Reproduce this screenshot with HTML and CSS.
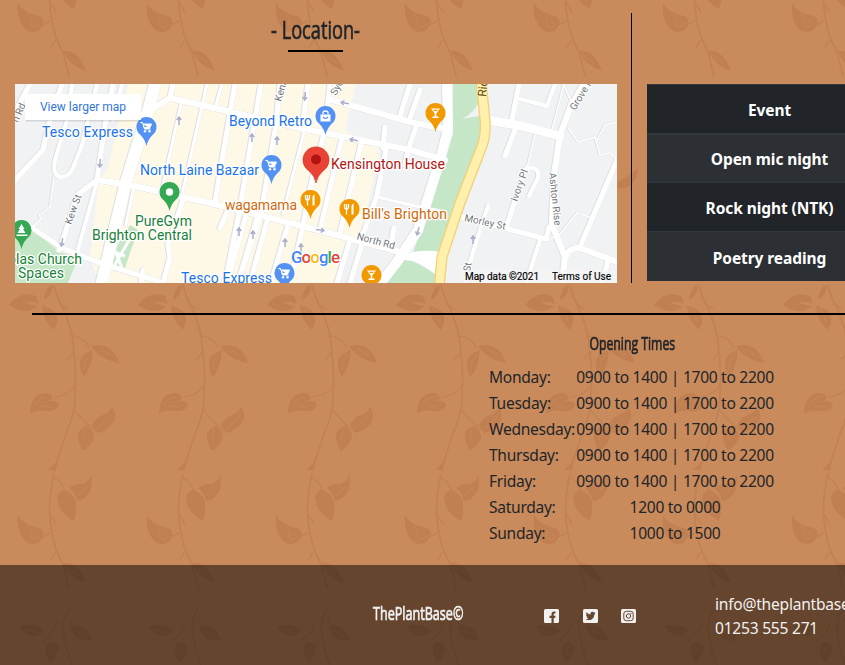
FILE: index.html
```html
<!DOCTYPE html>
<html lang="en">
<head>
<meta charset="utf-8">
<title>ThePlantBase</title>
<link rel="stylesheet" href="styles.css">
</head>
<body>
<svg class="vines" width="845" height="665" aria-hidden="true">
  <defs>
    <g id="vine">
      <path class="stem" d="M54 285Q56 296 63 308Q70 325 72 336Q77 370 75 395Q76 411 66 434L58 458L55 470M54 474Q48 500 50 520Q52 538 57 552L63 564L69 588M69 610Q61 618 64 636Q66 650 73 668"/>
      <path class="twig" d="M60 304L68 309M71 336Q82 335 89 347M73 353L68 359M75 385Q70 395 55 397M74 409Q82 420 94 430M54 478Q62 481 64 490M50 514L56 524M50 533L40 538M55 553L51 559M57 622Q54 633 43 641M69 618L73 626"/>
      <path class="leaf" d="M9 305Q20 290 36 296Q38 300 39 304Q31 301 25 302Q32 306 38 306Q26 317 9 305ZM42 305Q58 311 57 317Q58 324 54 330Q42 320 42 305ZM44 300Q44 293 50 285L53 286Q52 296 44 300ZM91 346Q112 341 119 363Q100 360 91 346ZM93 350Q79 355 80 364Q80 372 84 377Q92 367 93 350ZM30 414Q30 394 45 393Q52 392 53 399L46 402Q58 399 59 405Q57 412 46 411Q36 409 30 414ZM92 425Q97 416 103 415Q111 412 112 406Q117 414 114 421Q108 431 97 433ZM87 426Q95 432 94 438Q93 444 83 451Q71 431 87 426ZM48 470L57 461L55 470ZM69 488Q76 483 83 484Q90 480 92 474Q92 482 91 490Q85 501 77 501Q75 492 69 488ZM65 490Q77 496 76 504Q77 513 74 521Q57 512 57 496Q60 490 65 490ZM18 515Q22 523 35 527Q46 528 43 537Q40 542 38 543Q30 546 25 541Q16 531 18 515ZM63 563Q78 561 86 583Q70 578 63 563ZM19 626Q37 622 44 631Q30 643 19 626ZM70 626Q86 622 92 640Q75 644 70 626ZM52 642Q60 645 58 650Q57 655 51 663Q42 651 48 643ZM92 698Q112 690 122 680Q120 704 98 700Z"/>
      <path class="vein" d="M46 309Q51 314 52 322M100 349L110 355M90 355Q83 362 84 370M35 405Q40 397 46 397M40 406L50 407M98 428L110 417M78 495L87 487M85 430L83 440M27 525Q34 533 30 536Q34 542 40 536M34 532L38 536M67 567L78 575M27 630L38 633M76 631L84 634M52 647L50 654"/>
    </g>
    <pattern id="vines" width="129" height="665" patternUnits="userSpaceOnUse">
      <use href="#vine"/><use href="#vine" y="-512"/>
    </pattern>
  </defs>
  <rect width="845" height="665" fill="url(#vines)"/>
</svg>

<main>
  <div class="top">
    <section class="location">
      <h2><span class="narrow title">- Location-</span></h2>
      <svg class="map" viewBox="15 84 602 199" width="602" height="199">
        <defs>
          <path id="pin" d="M0 19Q-1.2 13 -6 8A10 10 0 1 1 6 8Q1.2 13 0 19Z"/>
          <g id="cart"><path d="M-6-4.500H-4L-2 2H4M-3-3H5L3.500.5H-2.500Z" fill="#fff" stroke="#fff" stroke-width="1"/><circle cx="-1.500" cy="4.300" r="1.200" fill="#fff"/><circle cx="3" cy="4.300" r="1.200" fill="#fff"/></g>
          <g id="fork"><path d="M-5-5V-2Q-5 0-3 0V5.500M-3-5V0M-1-5V-2Q-1 0-3 0" fill="none" stroke="#fff" stroke-width="1.300"/><path d="M2 5.500V-3Q2-5 4-5.500V5.500Z" fill="#fff"/></g>
          <path id="glass" d="M-4.500-4.500H4.500L.8.500V3.500H3V5H-3V3.500H-.8V.5ZM-2.500-3.300L-1.600-2H1.600L2.500-3.300Z" fill="#fff" fill-rule="evenodd"/>
          <path id="up" d="M0 4V-4M-2.200-1L0-4L2.200-1" fill="none" stroke="#a9aecb" stroke-width="1.500"/>
          <g id="roads">
            <path stroke-width="12" d="M156 80L149 108L126 182L100 290"/>
            <path stroke-width="5" d="M15 180L43 150L50 120L62 84M15 112L30 84M113 84L105 125L97 180L77 195L63 240L59 250M183 200L168 245L170 257L163 283M170 97L173 84"/>
            <path stroke-width="4" d="M72 84L67 120L55 160Q52 176 61 177Q69 177 73 168L82 145L97 84M97 182L77 253M122 84L113 120"/>
            <path stroke-width="1.500" d="M54 177L50 207L39 215L41 219L33 226"/>
            <path stroke-width="5" d="M28 225L62 248L97 262L160 282M143 270L141 284"/>
            <path stroke-width="6" d="M97 180L130 185L210 203L310 228L400 252M147 112L170 98L210 107L300 128L410 150L445 160M332 100L410 122L445 129"/>
            <path stroke-width="3" d="M182 100L163 185M207 84L182 195M134 186L126 225M222 84L215 108M305 128L283 214M377 197L415 206L440 211"/>
            <path stroke-width="5" d="M235 84L215 202M227 212L220 228M261 84L240 208L225 283M280 84L276 125L261 214L238 283M308 84L303 122M330 84L325 130L312 180L302 230L290 283M342 138L320 230M361 144L340 233M386 150L377 195L361 240M247 212L227 283M258 215L238 283M268 218L250 283M288 225L271 283M350 240L337 283M363 240L358 257L350 283M385 127L383 148M394 228L391 245M410 84L400 116M420 90L410 118M417 124L408 150L405 165"/>
            <path stroke-width="10" d="M447 80L448 130L440 160L418 230L397 262L375 290"/>
            <path stroke-width="9" d="M488 120L522 126L560 136"/>
            <path stroke-width="6" d="M588 76L570 108L560 135L554 175L552 225L565 257L562 283M565 259Q568 247 580 248L617 262"/>
            <path stroke-width="5" d="M519 84L512 120M515 130L505 156M458 216L546 239L549 227M617 160L580 247M608 261L602 283M525 170L507 225"/>
            <path stroke-width="4" d="M516 98L547 106L555 84M527 168Q540 166 538 178L529 196M488 206L472 255L465 283M540 240L526 283M588 84L570 104"/>
            <path stroke-width="1.500" d="M564 84L552 130M535 135L527 168M568 128L578 142L595 137L600 155L609 153L617 159M596 142L605 125L617 122M547 240L560 234L577 213L592 218M563 84L572 103"/>
          </g>
        </defs>
        <path fill="#f1f2f4" d="M15 84h602v199H15z"/>
        <path fill="#fef8e7" d="M128 84L107 170L98 180V188L90 258L100 283H333L346 240L361 237L380 147L345 130L356 84Z"/>
        <path fill="#c6e7c7" d="M15 236L31 229L60 252L78 258L68 283H15ZM130 225L138 230L125 268L106 264ZM453 84H479L484 135L440 253H413L453 135ZM404 256L436 274V283H385Z"/>
        <path fill="#fff" d="M397 258Q415 248 442 252L436 275Q420 260 404 260Z"/>
        <path fill="#f1f2f4" d="M462 119Q473 114 479 102L483 115Z"/>
        <path d="M108 250L125 256M112 243L122 268M134 232L114 266" stroke="#fff" stroke-width="3"/>
        <g class="road-edge"><use href="#roads"/></g>
        <use href="#roads" class="road"/>
        <path class="road" stroke-width="9" d="M447 80L448 130L440 160L418 230L397 262L375 290"/>
        <path fill="none" stroke="#f3cf70" stroke-width="11" d="M481 80L485 120Q486 136 482 146L460 203L442 257L439 290"/>
        <path fill="none" stroke="#fff0ae" stroke-width="8.500" d="M481 80L485 120Q486 136 482 146L460 203L442 257L439 290"/>
        <use href="#up" x="179" y="121"/><use href="#up" x="252" y="138"/><use href="#up" x="277" y="141"/><use href="#up" x="239" y="232"/><use href="#up" x="253" y="235"/><use href="#up" x="285" y="243"/><use href="#up" x="301" y="248"/><use href="#up" x="473" y="240"/>
        <use href="#up" transform="translate(100 163) rotate(185)"/><use href="#up" transform="translate(62 242) rotate(190)"/><use href="#up" transform="translate(305 96) rotate(185)"/><use href="#up" transform="translate(418 231) rotate(195)"/><use href="#up" transform="translate(345 103) rotate(-78)"/><use href="#up" transform="translate(354 140) rotate(-78)"/><use href="#up" transform="translate(320 230) rotate(98)"/>
        <g class="street">
          <text transform="translate(18 123) rotate(-67)">n Rd</text>
          <text transform="translate(71 225) rotate(-70)" textLength="31">Kew St</text>
          <text transform="translate(281 102) rotate(-74)">Kens</text>
          <text transform="translate(336 96) rotate(-62)">Syd</text>
          <text transform="translate(363 241) rotate(15)" textLength="39" x="-7">North Rd</text>
          <text transform="translate(464 221) rotate(12)" textLength="42">Morley St</text>
          <text transform="translate(517 202) rotate(-70)" textLength="33">Ivory Pl</text>
          <text transform="translate(549 173) rotate(84)" textLength="53">Ashton Rise</text>
          <text transform="translate(575 111) rotate(-58)">Grove H</text>
          <text transform="translate(470 272) rotate(-80)">St</text>
          <text class="route" transform="translate(486 97) rotate(-85)">Ric</text>
        </g>
        <g class="pins">
          <g transform="translate(146.500 127)"><use href="#pin" fill="#5491f5"/><use href="#cart"/></g>
          <g transform="translate(271.500 165)"><use href="#pin" fill="#5491f5"/><use href="#cart"/></g>
          <g transform="translate(284.500 273)"><use href="#pin" fill="#5491f5"/><use href="#cart"/></g>
          <g transform="translate(325.500 116)"><use href="#pin" fill="#5491f5"/><path d="M-5-1.500H5V5.500H-5Z" fill="#fff"/><path d="M-2.500-1.500V-3Q-2.500-5 0-5T2.500-3V-1.500" fill="none" stroke="#fff" stroke-width="1.300"/><path d="M-2.500 1Q0 4 2.500 1" fill="none" stroke="#5491f5" stroke-width="1.200"/></g>
          <g transform="translate(169.500 192)"><use href="#pin" fill="#34a853"/><circle r="3.700" fill="#fff"/></g>
          <g transform="translate(21.500 230)"><use href="#pin" fill="#34a853"/><path d="M0-6L3-1H1.500L4 3H-4L-1.500-1H-3ZM-5 4.500H6V6H-5Z" fill="#fff"/></g>
          <g transform="translate(310.500 200)"><use href="#pin" fill="#f29900"/><use href="#fork"/></g>
          <g transform="translate(349.500 209)"><use href="#pin" fill="#f29900"/><use href="#fork"/></g>
          <g transform="translate(435.500 113)"><use href="#pin" fill="#f29900"/><use href="#glass"/></g>
          <g transform="translate(371.500 275)"><use href="#pin" fill="#f29900"/><use href="#glass"/></g>
          <path d="M316 183Q315 176 308.500 170.500A13 13 0 1 1 323.500 170.500Q317 176 316 183Z" fill="#ea4335" stroke="#c5221f" stroke-width=".6"/><circle cx="316" cy="159.500" r="5" fill="#b31412"/>
        </g>
        <g class="place">
          <g fill="#1a73e8"><text x="42" y="137" textLength="91">Tesco Express</text><text x="229" y="126" textLength="83">Beyond Retro</text><text x="140" y="175" textLength="119">North Laine Bazaar</text><text x="181" y="283" textLength="91">Tesco Express</text></g>
          <g fill="#188038"><text x="135" y="226" textLength="57">PureGym</text><text x="92" y="240" textLength="100">Brighton Central</text><text x="8" y="264" textLength="74">olas Church</text><text x="18" y="278" textLength="46">Spaces</text></g>
          <g fill="#cf6a0a"><text x="225" y="210" textLength="72">wagamama</text><text x="362" y="219" textLength="85">Bill's Brighton</text></g>
          <text x="331" y="169" textLength="114" fill="#b31412">Kensington House</text>
        </g>
        <text class="google" x="291" y="263" textLength="49"><tspan fill="#4285f4">G</tspan><tspan fill="#ea4335">o</tspan><tspan fill="#fbbc05">o</tspan><tspan fill="#4285f4">g</tspan><tspan fill="#34a853">l</tspan><tspan fill="#ea4335">e</tspan></text>
        <path d="M461 270h156v13H461z" fill="#f5f5f5" opacity=".7"/>
        <g class="credit"><text x="465" y="280" textLength="74">Map data ©2021</text><text x="552" y="280" textLength="59">Terms of Use</text></g>
        <path d="M26 95.500h115v26H26z" fill="#000" opacity=".12"/><path d="M25 94h116v26H25z" fill="#fff"/>
        <text class="larger" x="40" y="111" textLength="86">View larger map</text>
      </svg>
    </section>
    <table class="events">
      <thead><tr><th>Event</th></tr></thead>
      <tbody><tr><th>Open mic night</th></tr><tr><th>Rock night (NTK)</th></tr><tr><th>Poetry reading</th></tr></tbody>
    </table>
  </div>
  <hr>
  <section class="opening">
    <h3><span class="narrow subtitle">Opening Times</span></h3>
    <dl>
      <dt>Monday:</dt><dd>0900 to 1400 | 1700 to 2200</dd>
      <dt>Tuesday:</dt><dd>0900 to 1400 | 1700 to 2200</dd>
      <dt>Wednesday:</dt><dd>0900 to 1400 | 1700 to 2200</dd>
      <dt>Thursday:</dt><dd>0900 to 1400 | 1700 to 2200</dd>
      <dt>Friday:</dt><dd>0900 to 1400 | 1700 to 2200</dd>
      <dt>Saturday:</dt><dd>1200 to 0000</dd>
      <dt>Sunday:</dt><dd>1000 to 1500</dd>
    </dl>
  </section>
</main>
<footer>
  <div class="brand"><span class="narrow name">ThePlantBase©</span></div>
  <nav>
    <svg viewBox="0 0 15 14" width="15" height="14"><rect width="15" height="14" rx="1.500" fill="#f1f1f1"/><path d="M7.500 14V9H5.500V6.800H7.500V5.300Q7.500 2.600 10 2.600H11.500V4.600H10.600Q9.700 4.600 9.700 5.500V6.800H11.500L11.200 9H9.700V14Z" fill="#66462f"/></svg>
    <svg viewBox="0 0 15 14" width="15" height="14"><rect width="15" height="14" rx="1.500" fill="#f1f1f1"/><path d="M12.500 4L11.500 5.200Q11.500 8.500 9 10.200Q6 12 2.500 10.200Q4.500 10.300 5.500 9.400Q4 9.200 3.600 8H4.500Q3 7.300 3 5.700L3.900 6Q2.500 4.600 3.400 3.200Q5 5.200 7.400 5.400Q7.200 2.800 9.400 2.800Q10.300 2.800 11 3.500L12.200 3L11.500 4.200Z" fill="#66462f"/></svg>
    <svg viewBox="0 0 15 14" width="15" height="14"><rect width="15" height="14" rx="1.500" fill="#f1f1f1"/><rect x="2.800" y="2.300" width="9.400" height="9.400" rx="2.600" fill="none" stroke="#66462f"/><circle cx="7.500" cy="7" r="2.200" fill="none" stroke="#66462f"/><circle cx="10" cy="4.500" r=".6" fill="#66462f"/></svg>
  </nav>
  <address><span class="mail">info@theplantbase.co.uk</span><span class="phone">01253 555 271</span></address>
</footer>
</body>
</html>
```
FILE: styles.css
```css
* { box-sizing: border-box; }
html { overflow: hidden; }
body { margin: 0; width: 845px; height: 665px; overflow: hidden; position: relative; background: #ca8b5c; color: #212529; font: 15.6px/26px "Noto Sans", "Open Sans", sans-serif; }

.vines { position: absolute; left: 0; top: 0; z-index: -1; }
.stem, .twig, .vein { fill: none; stroke: #c28253; stroke-linecap: round; }
.stem { stroke-width: 2; }
.twig { stroke-width: 1.5; }
.leaf { fill: #c18051; }
.vein { stroke: #ca8b5c; stroke-width: 1; opacity: .65; }

main { height: 565px; padding-top: 13px; overflow: hidden; }
.top { display: flex; height: 270px; }
.location { flex: none; width: 632px; padding-left: 15px; border-right: 1px solid #000; }
h2, h3 { margin: 0; font-weight: 400; }
h2 { width: 602px; height: 71px; display: flex; flex-direction: column; align-items: center; }
h2::after { content: ""; width: 55px; height: 2px; background: #000; margin: 4px 2px 0 0; }
.narrow { display: inline-block; font-family: "Open Sans", "Liberation Sans Narrow", sans-serif; white-space: nowrap; -webkit-text-stroke: .7px currentColor; }
.title { font-size: 26px; line-height: 33px; transform: scaleX(.7); }

.map { display: block; overflow: hidden; font-family: Roboto, sans-serif; }
.road, .road-edge { fill: none; stroke: #fff; stroke-linejoin: round; stroke-linecap: round; }
.road-edge { stroke: #dfe1e4; filter: drop-shadow(.7px 0 0 #dfe1e4) drop-shadow(-.7px 0 0 #dfe1e4); }
.street { font-size: 10px; fill: #70757a; paint-order: stroke; stroke: #fff; stroke-width: 2px; }
.street .route { font-size: 12px; fill: #5f4a12; stroke: #fff0ae; }
.place { font-size: 14px; paint-order: stroke; stroke: #fff; stroke-width: 2.5px; stroke-linejoin: round; }
.google { font: 500 17px Roboto, sans-serif; paint-order: stroke; stroke: #fff; stroke-width: 2px; }
.credit { font-size: 10px; fill: #000; stroke: #000; stroke-width: .15px; }
.larger { font-size: 12px; fill: #3377d6; }

.events { width: 245px; margin: 71px 0 0 15px; flex: none; border-collapse: collapse; color: #fff; height: 197px; align-self: flex-start; }
.events th { height: 49px; padding: 2px 0 0; border-top: 1px solid #32383e; background: #212529; font-weight: 700; font-size: 15.5px; line-height: 24px; letter-spacing: -.08px; }
.events thead th { border-bottom: 2px solid #32383e; height: 49px; }
.events tbody tr:nth-child(odd) th { background: #2c3034; }

hr { margin: 30px 0 0 32px; height: 2px; border: 0; background: #000; }
.opening { width: 286px; margin: 14px 0 0 489px; }
h3 { height: 35px; text-align: center; line-height: 27px; }
.subtitle { font-size: 17.5px; transform: scaleX(.7); }
dl { display: grid; grid-template-columns: 87px 198px; margin: 0; }
dt, dd { margin: 0; white-space: nowrap; letter-spacing: -.3px; }
dd { text-align: center; }

footer { height: 100px; overflow: hidden; background: rgba(0, 0, 0, .5); color: #f1f1f1; display: grid; grid-template-columns: 373px 171px 171px 130px; }
footer .brand { grid-column: 2; padding-top: 35px; }
.name { font-size: 17.5px; transform: scaleX(.72); transform-origin: left; }
nav { display: flex; gap: 23.5px; padding-top: 44px; }
address { font-style: normal; line-height: 24px; padding-top: 27px; display: flex; flex-direction: column; white-space: nowrap; letter-spacing: -.25px; }
```
